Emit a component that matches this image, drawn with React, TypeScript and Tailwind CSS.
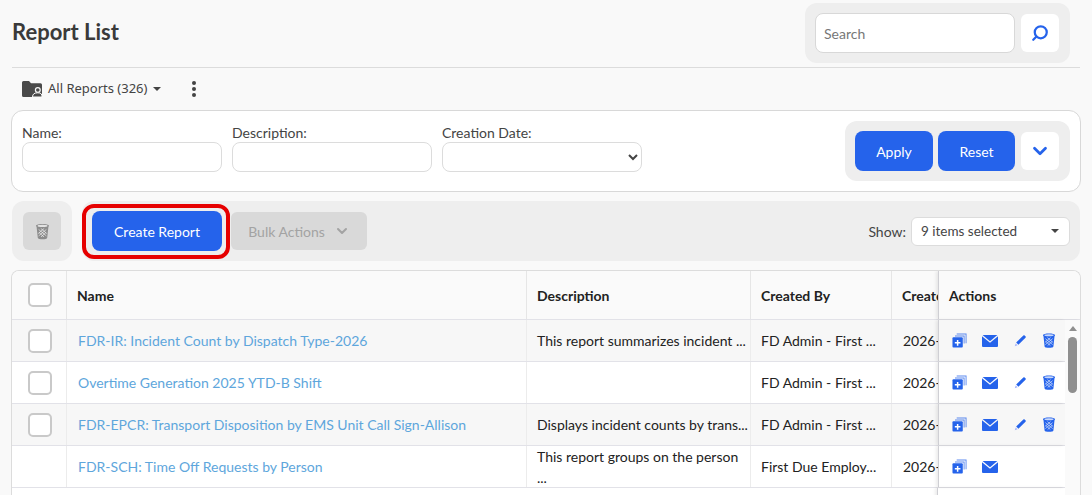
import { ChevronDown, Search } from "lucide-react";

const rows = [
  { name: "FDR-IR: Incident Count by Dispatch Type-2026", desc: "This report summarizes incident ...", by: "FD Admin - First ...", check: true, full: true },
  { name: "Overtime Generation 2025 YTD-B Shift", desc: "", by: "FD Admin - First ...", check: true, full: true },
  { name: "FDR-EPCR: Transport Disposition by EMS Unit Call Sign-Allison", desc: "Displays incident counts by trans...", by: "FD Admin - First ...", check: true, full: true },
  { name: "FDR-SCH: Time Off Requests by Person", desc: "This report groups on the person ...", by: "First Due Employ...", check: false, full: false },
];

function TrashIcon({ className }: { className: string }) {
  return (
    <svg viewBox="0 0 14 15" className={className} fill="currentColor">
      <path d="M1 2.2C1 1 4 .5 7 .5s6 .5 6 1.7c0 .4-.2.7-.5 1L11.4 13.4c-.1 1-2.2 1.4-4.4 1.4s-4.3-.4-4.4-1.4L1.5 3.2c-.3-.3-.5-.6-.5-1z" />
      <ellipse cx="7" cy="2.3" rx="4.6" ry="1" fill="#fff" opacity="0.75" />
      <path d="M3.4 5.6l7.2 6M5.4 4.6l5.6 4.8M3.8 8.4l4.6 4.2M10.6 5.6l-7.2 6M8.6 4.6L3 9.4M10.2 8.4l-4.6 4.2" stroke="#fff" strokeWidth="0.7" opacity="0.8" fill="none" />
    </svg>
  );
}

function CopyPlusIcon() {
  return (
    <svg viewBox="0 0 16 16" className="h-[15px] w-[15px] text-[#2563eb]" fill="currentColor">
      <path d="M5 .5h10.5V11h-1V1.5H5zM3.2 2.6h10.2v8.6h-1V3.6H3.2z" opacity="0.75" />
      <rect x="0.5" y="4.5" width="11" height="11" rx="1" />
      <path d="M5.2 7.5h1.6v2.2H9v1.6H6.8v2.2H5.2v-2.2H3V9.700h2.200z" fill="#fff" />
    </svg>
  );
}

function MailIcon() {
  return (
    <svg viewBox="0 0 16 12" className="h-[12px] w-[16px] text-[#2563eb]" fill="currentColor">
      <path d="M.6 0h14.800L8 6.200z" />
      <path d="M0 1.200l8 6.600 8-6.600V11a1 1 0 0 1-1 1H1a1 1 0 0 1-1-1z" />
    </svg>
  );
}

function PenIcon() {
  return (
    <svg viewBox="0 0 14 14" className="h-[14px] w-[14px]" fill="#2563eb">
      <path d="M3.200 8.600L10.300 1.500a1 1 0 0 1 1.400 0l.8.800a1 1 0 0 1 0 1.400L5.400 10.800z" />
      <path d="M2.700 9.400l1.900 1.900-2.900 1z" fill="#a5b4fc" />
    </svg>
  );
}

function Checkbox({ className }: { className: string }) {
  return <div className={`h-[24px] w-[24px] rounded-[5px] border-2 border-[#c9c9c9] bg-white ${className}`} />;
}

export default function App() {
  return (
    <div className="h-[495px] overflow-hidden bg-[#f9f9f9] px-3 font-['Lato',sans-serif] text-[14px] text-[#333]">
      <header className="flex h-[68px] items-start justify-between border-b border-[#dcdcdc] pr-[0px]">
        <h1 className="mt-[17px] text-[22px] font-bold leading-[30px] text-[#3a3a3a]">Report List</h1>
        <div className="mr-[10px] mt-[3px] flex h-[60px] w-[265px] items-center gap-[6px] rounded-xl bg-[#eeeeee] pl-[10px]">
          <input
            placeholder="Search"
            className="h-[40px] w-[200px] rounded-lg border border-[#d8d8d8] bg-white px-2 text-[14px] placeholder:text-[#777] focus:outline-none"
          />
          <button className="flex h-[38px] w-[38px] items-center justify-center rounded-md bg-white">
            <Search className="h-[18px] w-[18px] -scale-x-100 text-[#2563eb]" strokeWidth={3} />
          </button>
        </div>
      </header>

      <div className="flex h-[42px] items-center pl-[10px] font-['Noto_Sans',sans-serif] text-[13px] text-[#444]">
        <svg viewBox="0 0 20 16" className="h-[16px] w-[20px]">
          <path d="M0 1.500A1.500 1.500 0 0 1 1.500 0H7l2 2.300h9.500A1.500 1.500 0 0 1 20 3.800V16H1.500A1.500 1.500 0 0 1 0 14.500z" fill="#4a4a4a" />
          <circle cx="15.800" cy="9" r="3" fill="#f9f9f9" />
          <circle cx="15.800" cy="9" r="1.800" fill="#4a4a4a" />
          <path d="M10.500 16c0-3 2-4.200 5.300-4.200s4.200 1.200 4.200 4.200z" fill="#4a4a4a" stroke="#f9f9f9" strokeWidth="1" />
        </svg>
        <span className="ml-[6px]">All Reports (326)</span>
        <span className="ml-[6px] h-0 w-0 border-x-[4px] border-t-[4px] border-x-transparent border-t-[#444]" />
        <span className="ml-[31px] flex flex-col gap-[2.500px]">
          <i className="h-[3.500px] w-[3.500px] rounded-full bg-[#444]" />
          <i className="h-[3.500px] w-[3.500px] rounded-full bg-[#444]" />
          <i className="h-[3.500px] w-[3.500px] rounded-full bg-[#444]" />
        </span>
      </div>

      <section className="-mx-px flex h-[82px] items-center justify-between rounded-xl border border-[#d8d8d8] bg-white pl-[10px] pr-[10px]">
        <div className="flex gap-[10px] self-start pt-[13px]">
          {["Name:", "Description:"].map((label) => (
            <label key={label} className="block w-[200px] leading-[18px] text-[#444]">
              {label}
              <input className="block h-[30px] w-[200px] rounded-lg border border-[#dcdcdc] bg-white" />
            </label>
          ))}
          <label className="block w-[200px] leading-[18px] text-[#444]">
            Creation Date:
            <select className="block h-[30px] w-[200px] rounded-lg border border-[#dcdcdc] bg-white" />
          </label>
        </div>
        <div className="flex h-[60px] w-[225px] items-center rounded-xl bg-[#eeeeee] pl-[10px] text-white">
          <button className="h-[40px] w-[78px] rounded-lg bg-[#2563eb] text-[14px]">Apply</button>
          <button className="ml-[5px] h-[40px] w-[77px] rounded-lg bg-[#2563eb] text-[14px]">Reset</button>
          <button className="ml-[6px] flex h-[38px] w-[38px] items-center justify-center rounded-md bg-white">
            <ChevronDown className="h-[22px] w-[22px] text-[#2563eb]" strokeWidth={3} />
          </button>
        </div>
      </section>

      <section className="mt-[9px] flex h-[60px] gap-[10px]">
        <div className="flex w-[60px] items-center justify-center rounded-xl bg-[#eeeeee]">
          <div className="flex h-[38px] w-[38px] items-center justify-center rounded-md bg-[#d9d9d9]">
            <TrashIcon className="h-[17px] w-[15px] text-[#8c8c8c]" />
          </div>
        </div>
        <div className="relative flex flex-1 items-center rounded-xl bg-[#eeeeee] pl-[10px] pr-[10px]">
          <button className="h-[40px] w-[130px] rounded-lg bg-[#2563eb] text-[14px] text-white">Create Report</button>
          <div className="pointer-events-none absolute left-0 top-[3px] h-[55px] w-[148px] rounded-[12px] border-[4px] border-[#e60000]" />
          <button className="ml-[9px] flex h-[38px] w-[136px] items-center justify-center gap-[9px] rounded-md bg-[#d9d9d9] text-[14px] text-[#a3a3a3]">
            Bulk Actions
            <ChevronDown className="h-[16px] w-[16px]" strokeWidth={3} />
          </button>
          <span className="ml-auto text-[#444]">Show:</span>
          <div className="ml-[5px] flex h-[29px] w-[159px] items-center justify-between rounded-md border border-[#dcdcdc] bg-white pl-[9px] pr-[10px] text-[13.500px] text-[#444]">
            9 items selected
            <span className="h-0 w-0 border-x-[4px] border-t-[4px] border-x-transparent border-t-[#444]" />
          </div>
        </div>
      </section>

      <section className="-mx-px mt-[9px] overflow-hidden rounded-t-lg border-x border-t border-[#dcdcdc] bg-white">
        <div className="flex h-[49px] items-stretch border-b border-[#e2e2e8] bg-[#fafafa] font-bold text-[#222]">
          <div className="flex w-[55px] items-center justify-center border-r border-[#e6e6e6] pl-[2px]">
            <Checkbox className="" />
          </div>
          <div className="flex w-[460px] items-center border-r border-[#e6e6e6] pl-[10px]">Name</div>
          <div className="flex w-[224px] items-center border-r border-[#e6e6e6] pl-[10px]">Description</div>
          <div className="flex w-[141px] items-center border-r border-[#e6e6e6] pl-[10px]">Created By</div>
          <div className="flex w-[46px] items-center overflow-hidden whitespace-nowrap pl-[10px]">Created On</div>
          <div className="flex flex-1 items-center border-l border-[#cfcfd4] pl-[10px] shadow-[-2px_0_3px_rgba(0,0,0,0.08)]">Actions</div>
        </div>
        <div className="flex">
          <div className="flex-1">
            {rows.map((row, i) => (
              <div key={row.name} className={`flex h-[42px] items-stretch border-b border-[#e2e2e8] ${i % 2 === 0 ? "bg-[#f7f7f7]" : "bg-white"}`}>
                <div className="flex w-[55px] items-center justify-center border-r border-[#ececec] pl-[2px]">
                  {row.check && <Checkbox className="" />}
                </div>
                <div className="flex w-[460px] items-center border-r border-[#ececec] pl-[11px] text-[#5ea6dc]">{row.name}</div>
                <div className="flex w-[224px] items-center border-r border-[#ececec] pl-[10px] text-[#222]">{row.desc}</div>
                <div className="flex w-[141px] items-center border-r border-[#ececec] pl-[10px] text-[#222]">{row.by}</div>
                <div className="flex w-[46px] items-center overflow-hidden whitespace-nowrap pl-[11px] text-[#222]">2026-01-12</div>
                <div className="flex flex-1 items-center border-l border-[#cfcfd4] shadow-[-2px_0_3px_rgba(0,0,0,0.08)]">
                  <div className="flex w-[38px] justify-center pl-[3px]"><CopyPlusIcon /></div>
                  <div className="flex w-[24px] justify-center pl-[1px]"><MailIcon /></div>
                  {row.full && (
                    <>
                      <div className="ml-[6px] flex w-[26px] justify-center"><PenIcon /></div>
                      <div className="ml-[2px] flex w-[28px] justify-center"><TrashIcon className="h-[15px] w-[14px] text-[#2563eb]" /></div>
                    </>
                  )}
                </div>
              </div>
            ))}
            <div className="flex h-[42px]">
              <div className="ml-[925px] flex-1 border-l border-[#cfcfd4] shadow-[-2px_0_3px_rgba(0,0,0,0.08)]" />
            </div>
          </div>
          <div className="flex w-[15px] flex-col items-center bg-[#fafafa] pt-[6px]">
            <span className="h-0 w-0 border-x-[4.500px] border-b-[5px] border-x-transparent border-b-[#8f8f8f]" />
            <span className="mt-[6px] h-[56px] w-[9px] rounded-full bg-[#8f8f8f]" />
          </div>
        </div>
      </section>
    </div>
  );
}
